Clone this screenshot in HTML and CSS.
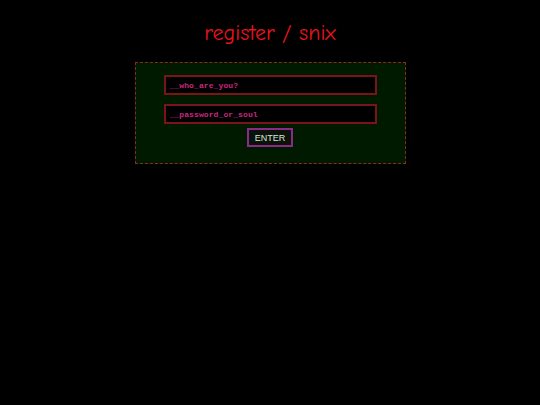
FILE: index.html
```html
<!DOCTYPE html>
<html>
<head>
<meta charset="utf-8">
<link rel="stylesheet" href="styles.css">
</head>
<body>
<h1 class="title">register / snix</h1>
<form class="panel">
  <input class="field" type="text" placeholder="__who_are_you?">
  <input class="field" type="password" placeholder="__password_or_soul">
  <button class="enter" type="button">ENTER</button>
</form>
</body>
</html>
```
FILE: styles.css
```css
html, body {
  margin: 0;
  padding: 0;
  background: #000;
}
body {
  display: flex;
  flex-direction: column;
  align-items: center;
  padding-top: 18px;
}
.title {
  margin: 0 0 14px 0;
  font-family: "Comic Sans MS", "Comic Neue", cursive;
  font-weight: normal;
  font-size: 22px;
  line-height: 30px;
  color: #e8141c;
}
.panel {
  box-sizing: border-box;
  width: 271px;
  margin: 0;
  padding: 12px 28px 16px 28px;
  border: 1px dashed #8a2a20;
  background: #001a00;
  display: flex;
  flex-direction: column;
  align-items: center;
}
.field {
  box-sizing: border-box;
  width: 213px;
  height: 20px;
  margin: 0 0 9px 0;
  padding: 0 4px;
  background: #000;
  border: 2px solid #7a1418;
  outline: none;
  font-family: "Liberation Mono", "DejaVu Sans Mono", monospace;
  font-size: 8px;
  font-weight: bold;
  letter-spacing: 0.1px;
  color: #c8287e;
}
.field:last-of-type {
  margin-bottom: 4px;
}
.field::placeholder {
  color: #c8287e;
  opacity: 1;
}
.enter {
  box-sizing: border-box;
  width: 46px;
  height: 19px;
  padding: 0;
  background: #0a120a;
  border: 2px solid #8a2a8a;
  font-family: "Liberation Sans", Arial, sans-serif;
  font-size: 9px;
  color: #dce4dc;
}
```
